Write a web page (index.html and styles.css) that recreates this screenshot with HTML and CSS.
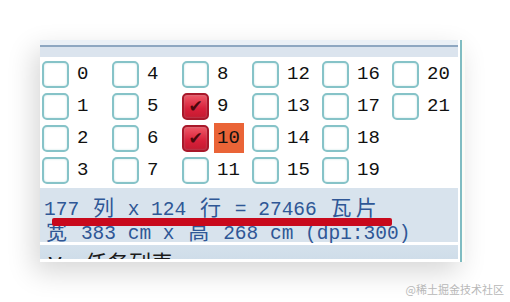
FILE: index.html
```html
<!DOCTYPE html>
<html>
<head>
  <meta charset="UTF-8">
  <title>Tiles</title>
  <link rel="stylesheet" href="styles.css">
</head>
<body>
<div class="stage">
  <div class="panel">
    <div class="content">
      <div class="titlebar"></div>
      <div class="grid">
        <label class="item"><span class="box"></span><span class="num">0</span></label>
        <label class="item"><span class="box"></span><span class="num">1</span></label>
        <label class="item"><span class="box"></span><span class="num">2</span></label>
        <label class="item"><span class="box"></span><span class="num">3</span></label>
        <label class="item"><span class="box"></span><span class="num">4</span></label>
        <label class="item"><span class="box"></span><span class="num">5</span></label>
        <label class="item"><span class="box"></span><span class="num">6</span></label>
        <label class="item"><span class="box"></span><span class="num">7</span></label>
        <label class="item"><span class="box"></span><span class="num">8</span></label>
        <label class="item"><span class="box checked">&#10004;</span><span class="num">9</span></label>
        <label class="item"><span class="box checked">&#10004;</span><span class="num current">10</span></label>
        <label class="item"><span class="box"></span><span class="num">11</span></label>
        <label class="item"><span class="box"></span><span class="num">12</span></label>
        <label class="item"><span class="box"></span><span class="num">13</span></label>
        <label class="item"><span class="box"></span><span class="num">14</span></label>
        <label class="item"><span class="box"></span><span class="num">15</span></label>
        <label class="item"><span class="box"></span><span class="num">16</span></label>
        <label class="item"><span class="box"></span><span class="num">17</span></label>
        <label class="item"><span class="box"></span><span class="num">18</span></label>
        <label class="item"><span class="box"></span><span class="num">19</span></label>
        <label class="item"><span class="box"></span><span class="num">20</span></label>
        <label class="item"><span class="box"></span><span class="num">21</span></label>
      </div>
      <div class="status">
        <div class="line">177 <span class="wide">列</span> x 124 <span class="wide">行</span> = 27466 <span class="wide">瓦</span><span class="wide">片</span></div>
        <div class="line"><span class="wide">宽</span> 383 cm x <span class="wide">高</span> 268 cm (dpi:300)</div>
      </div>
      <div class="tasks"><span class="tasks-text"><span class="chev">v</span>任务列表</span></div>
    </div>
    <div class="rail"></div>
    <div class="strip"></div>
  </div>
  <div class="watermark">@稀土掘金技术社区</div>
</div>
</body>
</html>
```

FILE: styles.css
```css
body {
  margin: 0;
  background: #fff;
  font-family: "Liberation Mono", "Noto Sans CJK SC", monospace;
}
.stage {
  position: relative;
  width: 510px;
  height: 302px;
  padding: 40px 0 0 40px;
  box-sizing: border-box;
  overflow: hidden;
}
.panel {
  position: relative;
  display: flex;
  width: 425px;
  height: 222px;
  background: #fff;
  box-shadow: -6px 10px 26px rgba(0, 0, 0, 0.16);
}
.content {
  width: 418px;
  display: flex;
  flex-direction: column;
}
.titlebar {
  height: 17px;
  background: linear-gradient(#eaf0f6 0 5px, #8ea7c1 5px 7px, #dbe4ee 7px);
}
.grid {
  display: grid;
  grid-auto-flow: column;
  grid-template-columns: repeat(6, 70px);
  grid-template-rows: repeat(4, 32px);
  padding: 1px 0 2px 2px;
  height: 131px;
  box-sizing: border-box;
}
.item {
  display: flex;
  align-items: center;
  gap: 5px;
}
.box {
  width: 23px;
  height: 23px;
  border: 2px solid #86c3c8;
  border-radius: 5px;
  background: #fff;
  box-shadow: inset 0 0 2px rgba(134, 195, 200, 0.5);
  display: flex;
  align-items: center;
  justify-content: center;
  font-family: "DejaVu Sans", sans-serif;
  font-size: 17px;
  color: #4a080c;
}
.box.checked {
  border-color: #a8182a;
  background: linear-gradient(#f05a68, #d8203a 60%, #c41a30);
}
.num {
  height: 30px;
  line-height: 30px;
  padding: 0 4px 0 3px;
  font-size: 19px;
  color: #111;
}
.num.current {
  background: #ea6437;
}
.status {
  height: 57px;
  padding: 10px 0 0 4px;
  box-sizing: border-box;
  background: #d8e3ed;
  color: #2f5796;
  font-size: 19.5px;
  border-bottom: 3px solid #fff;
}
.line {
  height: 24px;
  line-height: 24px;
  white-space: nowrap;
}
.wide {
  display: inline-block;
  width: 2ch;
  text-align: center;
  font-size: 21px;
}
.tasks {
  height: 14px;
  overflow: hidden;
  background: linear-gradient(#d4e1ec, #cfdde9);
  padding-left: 8px;
}
.tasks-text {
  display: block;
  font-family: "Noto Sans CJK SC", sans-serif;
  font-size: 22px;
  line-height: 32px;
  color: #1a1a1a;
}
.chev {
  display: inline-block;
  width: 37px;
  font-family: "DejaVu Sans", sans-serif;
  font-size: 24px;
}
.rail {
  width: 2px;
  margin-left: 2px;
  background: #7fbcc2;
}
.strip {
  width: 3px;
  background: #fbfbf6;
}
.watermark {
  position: absolute;
  right: 6px;
  bottom: 5px;
  font-family: "Noto Sans CJK SC", sans-serif;
  font-size: 11px;
  color: #b8b8b8;
}
/* red annotation stroke under the first status line */
.panel::after {
  content: "";
  position: absolute;
  left: 12px;
  top: 178px;
  width: 340px;
  height: 8px;
  border-radius: 2px;
  background: #c8091c;
}
```
